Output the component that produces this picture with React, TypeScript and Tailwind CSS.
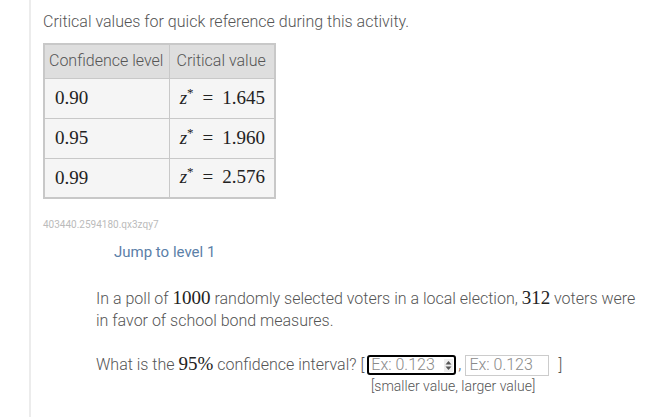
import React from "react";

const rows = [
  { level: "0.90", value: "1.645" },
  { level: "0.95", value: "1.960" },
  { level: "0.99", value: "2.576" },
];

function Zval({ v }: { v: string }) {
  return (
    <span className="font-['Liberation_Serif',serif] text-[19px] text-[#222] leading-none whitespace-nowrap">
      <i>z</i>
      <span className="text-[13px] align-[7px]">*</span>
      <span className="mx-[9px]">=</span>
      {v}
    </span>
  );
}

function Num({ children }: { children: React.ReactNode }) {
  return (
    <span className="font-['Liberation_Serif',serif] text-[19px] text-[#222] leading-[18px]">
      {children}
    </span>
  );
}

export default function App() {
  return (
    <div className="w-[668px] h-[417px] bg-white flex font-['Roboto',sans-serif] text-[#555] overflow-hidden">
      <div className="w-[29px] shrink-0" />
      <div className="w-[2px] shrink-0 bg-[#ececec]" />
      <div className="flex-1 pl-[12px] pt-[10px]">
        <p className="text-[16px] font-light leading-[24px]">
          Critical values for quick reference during this activity.
        </p>

        <table className="mt-[9px] border-2 border-[#c8c8c8] border-collapse bg-[#f5f5f5]">
          <thead>
            <tr className="bg-[#dedede] h-[34px]">
              <th className="w-[125px] px-[4px] text-left font-light text-[16px] whitespace-nowrap border border-[#c8c8c8]">
                Confidence level
              </th>
              <th className="w-[106px] px-[7px] text-left font-light text-[16px] whitespace-nowrap border border-[#c8c8c8]">
                Critical value
              </th>
            </tr>
          </thead>
          <tbody>
            {rows.map((r) => (
              <tr key={r.level} className="h-[40px]">
                <td className="px-[10px] border border-[#c8c8c8]">
                  <span className="font-['Liberation_Serif',serif] text-[19px] text-[#222]">
                    {r.level}
                  </span>
                </td>
                <td className="pr-[9px] text-right border border-[#c8c8c8]">
                  <Zval v={r.value} />
                </td>
              </tr>
            ))}
          </tbody>
        </table>

        <p className="mt-[19px] text-[10px] text-[#bbb] leading-[14px]">
          403440.2594180.qx3zqy7
        </p>

        <p className="mt-[10px] ml-[71px] text-[15px] text-[#5b80a8] leading-[20px]">
          Jump to level 1
        </p>

        <div className="ml-[53px] mt-[26px] w-[548px]">
          <p className="text-[16px] font-light leading-[22px]">
            In a poll of <Num>1000</Num> randomly selected voters in a local
            election, <Num>312</Num> voters were in favor of school bond
            measures.
          </p>

          <div className="mt-[22px] flex items-center text-[16px] font-light h-[22px]">
            <span>
              What is the <Num>95%</Num> confidence interval? [
            </span>
            <div className="ml-[3px] w-[89px] h-[20px] border-2 border-black rounded-[3px] flex items-center pl-[2px] pr-[1px] bg-white">
              <span className="text-[#8a8a8a] flex-1 leading-none">Ex: 0.123</span>
              <svg width="9" height="13" viewBox="0 0 9 13" className="shrink-0">
                <rect x="0" y="0" width="9" height="13" fill="#eee" />
                <path d="M1.5 5.5 L4.5 2 L7.5 5.5 Z" fill="#555" />
                <path d="M1.5 7.5 L4.5 11 L7.5 7.5 Z" fill="#555" />
              </svg>
            </div>
            <span className="ml-[2px]">,</span>
            <div className="ml-[4px] w-[84px] h-[21px] border border-[#ccc] flex items-center pl-[3px]">
              <span className="text-[#8a8a8a] leading-none">Ex: 0.123</span>
            </div>
            <span className="ml-[9px]">]</span>
          </div>
          <p className="ml-[275px] mt-[2px] text-[14px] font-light leading-[16px]">
            [smaller value, larger value]
          </p>
        </div>
      </div>
    </div>
  );
}
